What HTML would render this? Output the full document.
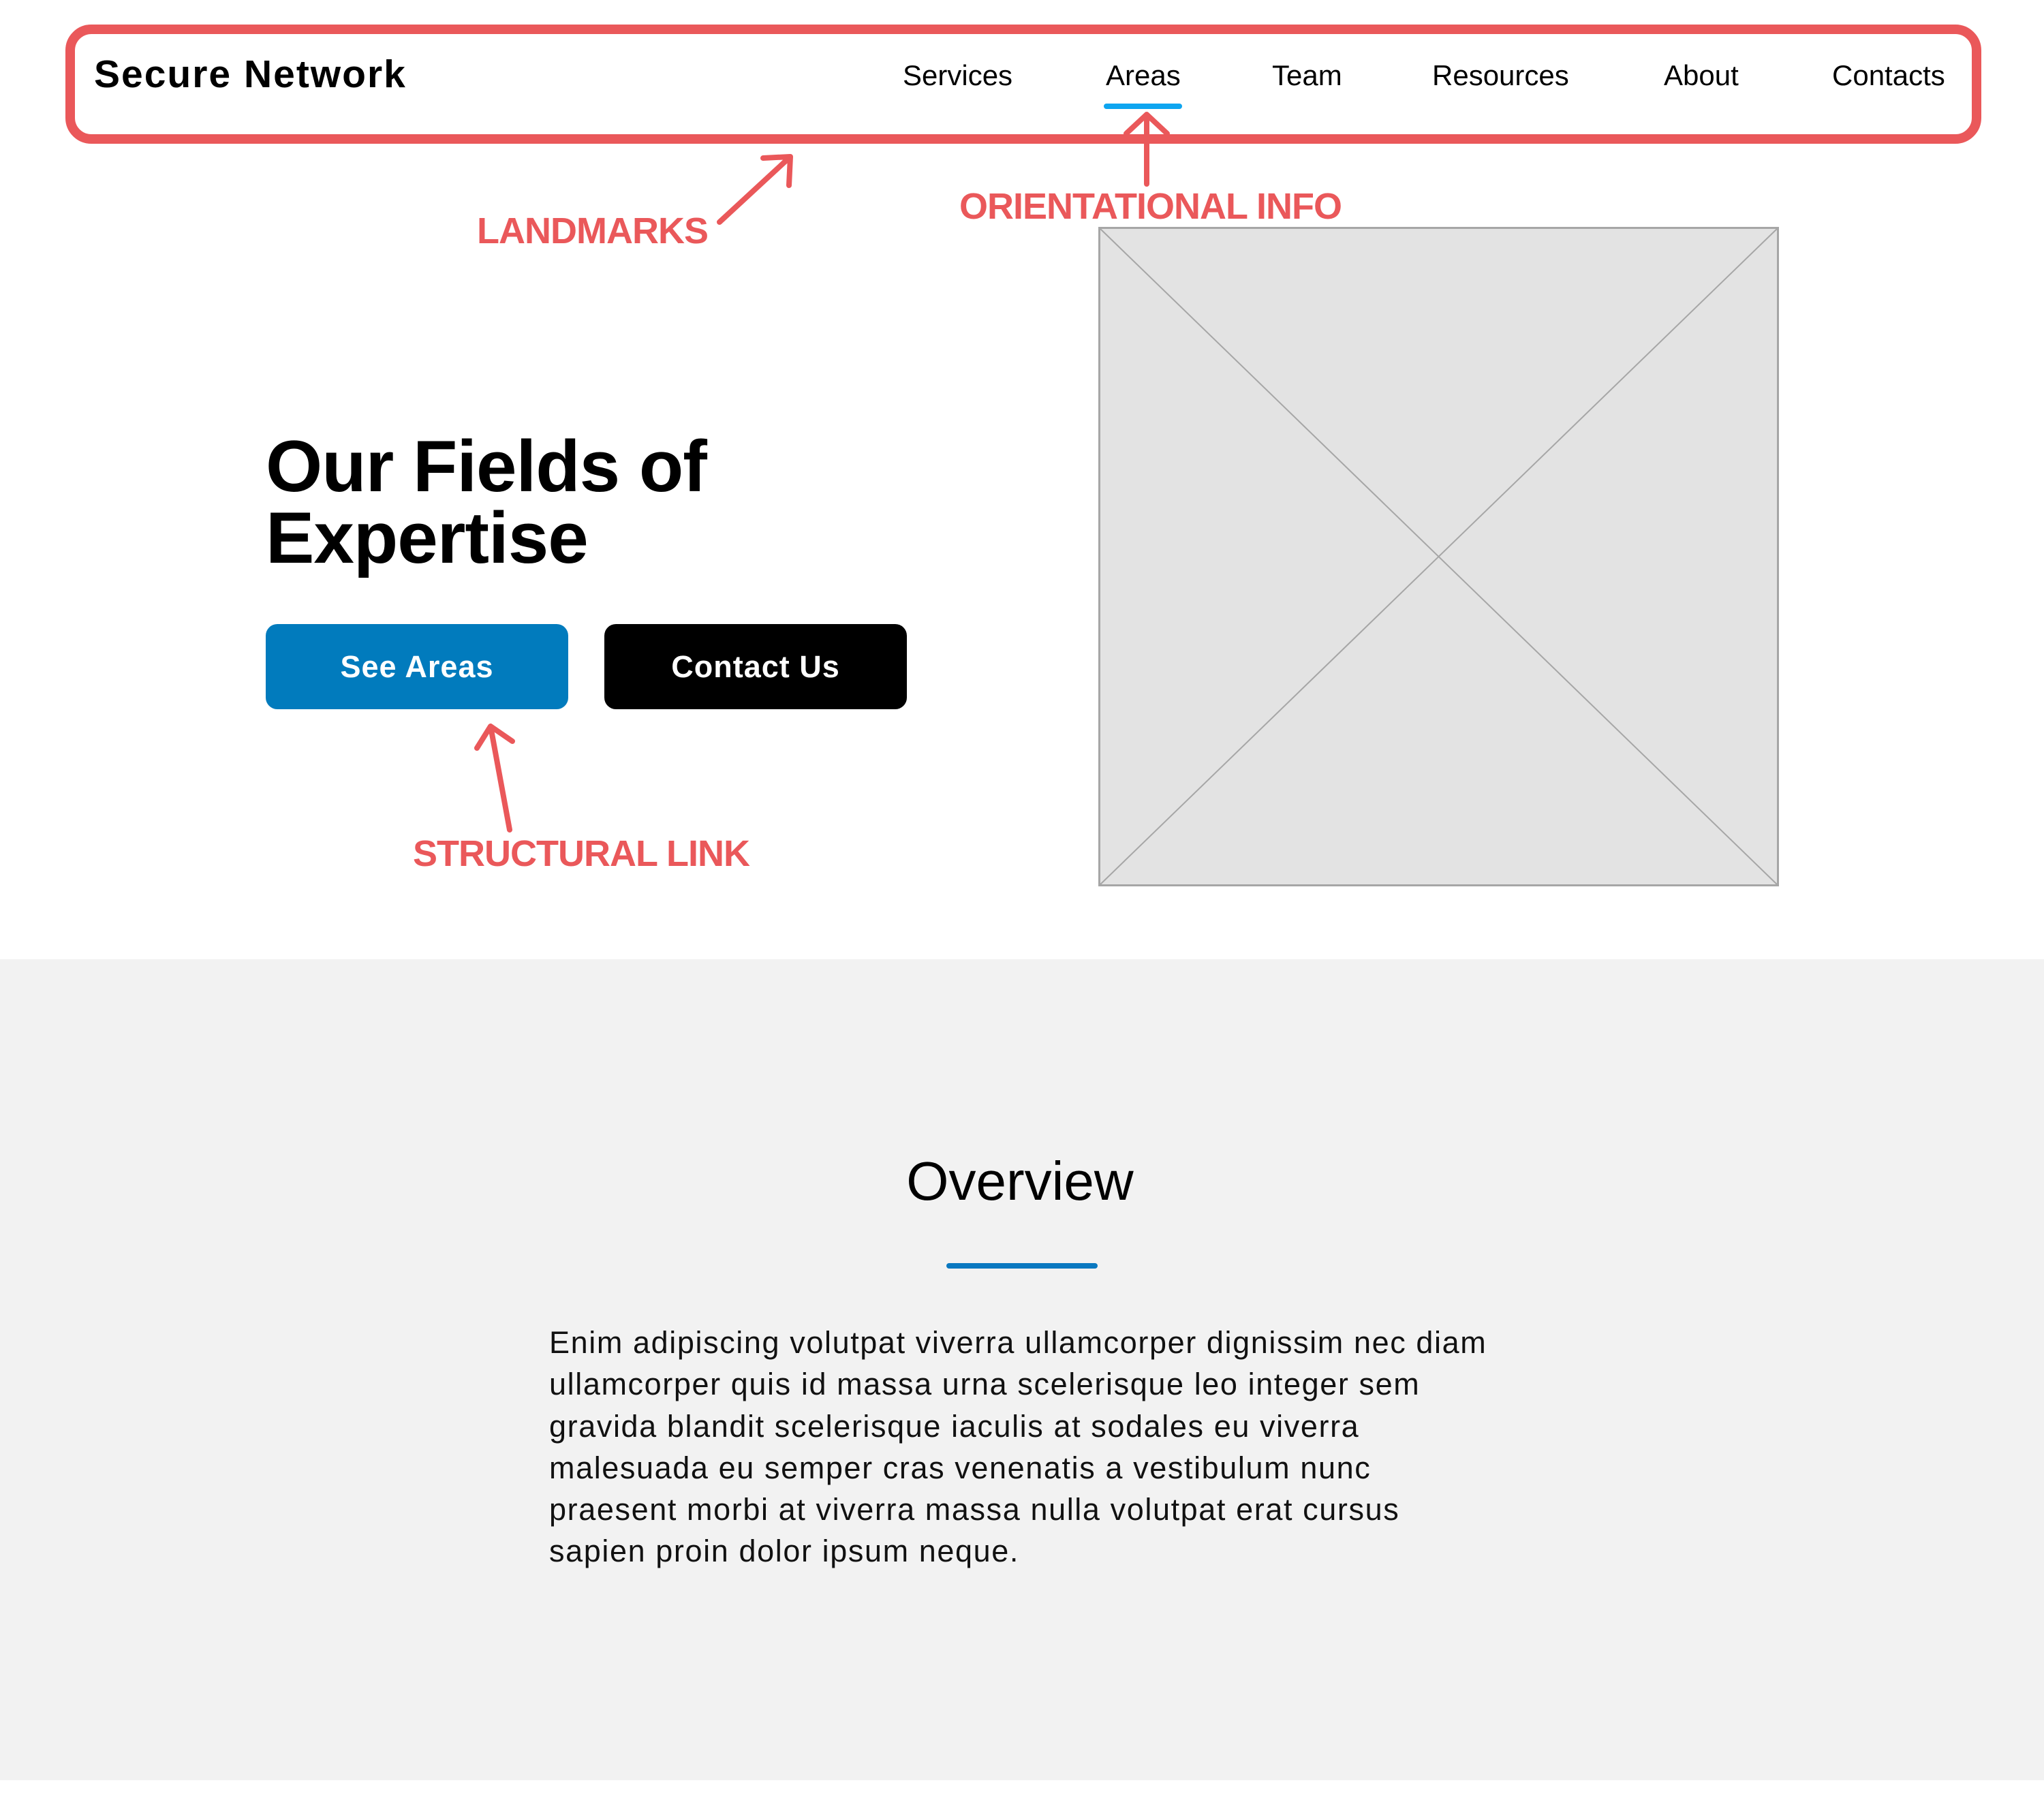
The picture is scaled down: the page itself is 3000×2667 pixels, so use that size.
<!DOCTYPE html>
<html><head><meta charset="utf-8"><style>
*{margin:0;padding:0;box-sizing:border-box}
body{width:3000px;height:2667px;background:#fff;font-family:"Liberation Sans",sans-serif;position:relative;overflow:hidden;color:#000}
.abs{position:absolute;white-space:nowrap}
.nav{position:absolute;left:96px;top:36px;width:2812px;height:175px;border:14px solid #ea585a;border-radius:38px}
.logo{left:138px;top:76px;font-size:57px;font-weight:bold;letter-spacing:2px}
.ni{top:84px;font-size:42px;line-height:54px}
.lbl{color:#ea585a;font-weight:bold;font-size:54px;line-height:60px;letter-spacing:-1px}
h1{position:absolute;left:390px;top:632px;font-size:107px;line-height:105px;font-weight:bold;letter-spacing:-1px}
.btn{position:absolute;top:916px;width:444px;height:125px;border-radius:17px;color:#fff;font-weight:bold;font-size:45px;letter-spacing:1px;display:flex;align-items:center;justify-content:center}
.grey{position:absolute;left:0;top:1408px;width:3000px;height:1205px;background:#f2f2f2}
p{position:absolute;left:806px;top:1940px;font-size:45px;line-height:61.3px;color:#111;letter-spacing:1.6px;white-space:nowrap}
</style></head><body>
<div class="nav"></div>
<div class="abs logo">Secure Network</div>
<div class="abs ni" style="left:1325px">Services</div>
<div class="abs ni" style="left:1623px">Areas</div>
<div class="abs ni" style="left:1867px">Team</div>
<div class="abs ni" style="left:2102px">Resources</div>
<div class="abs ni" style="left:2442px">About</div>
<div class="abs ni" style="left:2689px">Contacts</div>
<div class="abs" style="left:1620px;top:152px;width:115px;height:8px;border-radius:4px;background:#0ea5f0"></div>
<svg class="abs" style="left:0;top:0" width="3000" height="1400" fill="none" stroke="#ea585a" stroke-width="8" stroke-linecap="round" stroke-linejoin="round">
<path d="M1683 270V168M1653 196L1683 168L1713 196"/>
<path d="M1056 326L1160 230M1120 232L1160 230L1158 272"/>
<path d="M748 1218L720 1066M700 1098L720 1066L752 1088"/>
</svg>
<div class="abs lbl" style="left:1408px;top:273px">ORIENTATIONAL INFO</div>
<div class="abs lbl" style="left:700px;top:309px">LANDMARKS</div>
<div class="abs lbl" style="left:606px;top:1223px">STRUCTURAL LINK</div>
<h1>Our Fields of<br>Expertise</h1>
<div class="btn" style="left:390px;background:#017bbd">See Areas</div>
<div class="btn" style="left:887px;background:#000">Contact Us</div>
<svg class="abs" style="left:1612px;top:333px" width="999" height="968">
<rect x="1.5" y="1.5" width="996" height="965" fill="#e3e3e3" stroke="#a6a6a6" stroke-width="3"/>
<path d="M1.5 1.5L997.5 966.5M997.5 1.5L1.5 966.5" stroke="#a6a6a6" stroke-width="2"/>
</svg>
<div class="grey"></div>
<div class="abs" style="left:0;width:2994px;top:1684px;text-align:center;font-size:80px;line-height:100px">Overview</div>
<div class="abs" style="left:1389px;top:1854px;width:222px;height:8px;border-radius:4px;background:#0a78c0"></div>
<p>Enim adipiscing volutpat viverra ullamcorper dignissim nec diam<br>ullamcorper quis id massa urna scelerisque leo integer sem<br>gravida blandit scelerisque iaculis at sodales eu viverra<br>malesuada eu semper cras venenatis a vestibulum nunc<br>praesent morbi at viverra massa nulla volutpat erat cursus<br>sapien proin dolor ipsum neque.</p>
</body></html>
